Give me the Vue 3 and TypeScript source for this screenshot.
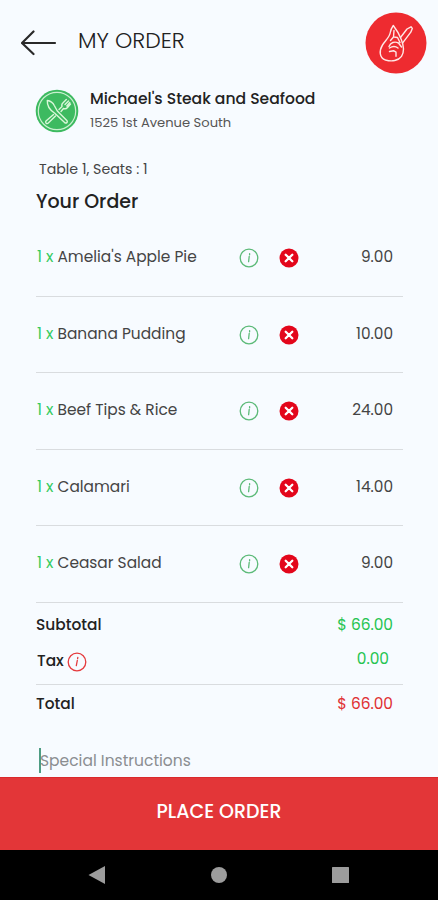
<script setup lang="ts">
interface OrderItem {
  name: string
  qty: number
  price: string
}

const items: OrderItem[] = [
  { name: "Amelia's Apple Pie", qty: 1, price: '9.00' },
  { name: 'Banana Pudding', qty: 1, price: '10.00' },
  { name: 'Beef Tips & Rice', qty: 1, price: '24.00' },
  { name: 'Calamari', qty: 1, price: '14.00' },
  { name: 'Ceasar Salad', qty: 1, price: '9.00' },
]
</script>

<template>
  <div class="screen">
    <header class="header">
      <svg class="back" width="36" height="26" viewBox="0 0 36 26">
        <path d="M12.500 1.500 1 13l11.500 11M1 13H34" />
      </svg>
      <h1 class="title">MY ORDER</h1>
      <svg class="brand" width="62" height="62" viewBox="0 0 62 62">
        <circle class="brand-bg" cx="31" cy="31" r="30.500" />
        <path d="M28.300 13.500c-1.800 2.500-2.600 4.300-3 7-.8 4.800-4.600 7.500-7.800 12.500-3.600 5.800-3.200 13 3 15 6.300 1.800 13 .8 16-3.600 3.200-5 2-11.600-.4-17.400-1.800-4.800-4.400-9-7.800-13.500z" />
        <path d="M35.500 25.500 42 17l4-2.200 1.300 1.600-1.500 3.800-8.300 11" />
        <path d="M29 18.500l-.5 6.500-3 3.500M29 25l3.500.5 2.500 5M24 34.500c1.500-4 5.500-5.500 9.500-3.500l3 4M24.500 36c3-2 6-2 8.500 0M24.500 39.500l4-.8 2.500 1.500v4" />
      </svg>
    </header>

    <section class="restaurant">
      <svg class="logo" width="44" height="44" viewBox="0 0 44 44">
        <circle class="logo-bg" cx="22" cy="22" r="21.300" />
        <circle class="ring" cx="22" cy="22" r="18.700" />
        <path class="tool" d="M12.300 11.500c3.500.5 5.500 2 7 5l3 5.500 9.500 9.500c1.500 1.500-.7 3.500-2.200 2L19.500 24c-4-2.500-7.500-6.500-7.200-12.500z" />
        <path class="tool" d="M18.500 25.500 11 32c-1.200 1.500.8 3.500 2.300 2.100l7.200-7M24 20.500l3-3c-.7-2 0-3 1.300-4l3-3M30 15.500l3.500-3.500M26 22.500l2.500-3c1.700.7 3 .2 4-1l3-3.500M31.800 17l3-3.500" />
      </svg>
      <div class="place">
        <div class="place-name">Michael's Steak and Seafood</div>
        <div class="place-address">1525 1st Avenue South</div>
      </div>
    </section>

    <main class="content">
      <div class="table-info">Table 1, Seats : 1</div>
      <h2 class="heading">Your Order</h2>

      <div v-for="item in items" :key="item.name" class="row">
        <div class="item"><span class="qty">{{ item.qty }} x</span><span>{{ item.name }}</span></div>
        <svg class="info" width="20" height="20" viewBox="0 0 20 20">
          <circle cx="10" cy="10" r="8.800" />
          <path d="M10.600 5.600v1.200M10.200 8.500l-.6 5.200" />
        </svg>
        <svg class="remove" width="20" height="20" viewBox="0 0 20 20">
          <circle cx="10" cy="10" r="9.500" />
          <path d="m6.700 6.700 6.600 6.600M13.300 6.700l-6.600 6.600" />
        </svg>
        <div class="price">{{ item.price }}</div>
      </div>

      <div class="totals">
        <div class="line subtotal"><span>Subtotal</span><span class="amount green">$ 66.00</span></div>
        <div class="line tax">
          <span class="tax-label">Tax</span>
          <svg class="info red-info" width="20" height="20" viewBox="0 0 20 20">
            <circle cx="10" cy="10" r="8.800" />
            <path d="M10.800 5.500l-.2 1.200M10.300 8.500l-1 5.200" />
          </svg>
          <span class="amount green">0.00</span>
        </div>
      </div>
      <div class="line total"><span>Total</span><span class="amount red">$ 66.00</span></div>

      <div class="instructions"><i class="caret"></i><span>Special Instructions</span></div>
    </main>

    <button class="place-order">PLACE ORDER</button>
    <nav class="navbar">
      <svg width="438" height="50" viewBox="0 0 438 50">
        <path d="M88.500 25 105 16v18z" />
        <circle cx="219" cy="25" r="8" />
        <rect x="332" y="17" width="17" height="16" rx=".5" />
      </svg>
    </nav>
  </div>
</template>

<style>
body {
  background: #f7fbff;
}
</style>

<style scoped>
.screen {
  width: 438px;
  height: 900px;
  overflow: hidden;
  display: flex;
  flex-direction: column;
  background: #f7fbff;
  color: #222;
  font-family: Poppins, Inter, "Liberation Sans", sans-serif;
}
svg {
  display: block;
  flex: none;
  fill: none;
  stroke-linecap: round;
  stroke-linejoin: round;
}
.header {
  height: 84px;
  display: flex;
  align-items: center;
  padding: 1px 11px 0 21px;
  box-sizing: border-box;
  flex: none;
}
.back {
  stroke: #292929;
  stroke-width: 2.200;
}
.title {
  margin: -4px auto 0 21px;
  font-size: 22px;
  line-height: 30px;
  font-weight: 300;
  white-space: nowrap;
}
.brand {
  stroke: #ffe7e5;
  stroke-width: 1.400;
}
.brand-bg {
  fill: #ee2b30;
  stroke: none;
}
.restaurant {
  height: 66px;
  display: flex;
  padding: 5px 0 0 35px;
  box-sizing: border-box;
  flex: none;
}
.logo-bg {
  fill: #3dba60;
}
.ring {
  stroke: #c9f0cf;
  stroke-width: 1.200;
}
.tool {
  stroke: #d9f7d8;
  stroke-width: 1.400;
}
.place {
  padding-left: 11px;
  white-space: nowrap;
}
.place-name {
  font-size: 15.600px;
  font-weight: 500;
  line-height: 20px;
}
.place-address {
  margin-top: 4px;
  font-size: 13.100px;
  line-height: 20px;
  color: #555;
}
.content {
  flex: 1;
  min-height: 0;
  padding: 0 35px 0 36px;
}
.table-info {
  padding: 9px 0 0 3px;
  font-size: 14.200px;
  line-height: 20px;
  color: #444;
}
.heading {
  margin: 9px 0 0;
  font-size: 19px;
  line-height: 28px;
  font-weight: 500;
}
.row {
  height: 76.600px;
  box-sizing: border-box;
  border-bottom: 1px solid #d9dcdf;
  display: flex;
  padding: 27px 10px 0 1px;
}
.heading + .row {
  height: 80.500px;
  padding-top: 31px;
}
.item {
  width: 202px;
  font-size: 15.400px;
  line-height: 20px;
  white-space: nowrap;
  color: #444;
}
.qty {
  display: inline-block;
  width: 20.500px;
  color: #36cb60;
}
.info {
  margin-top: 1px;
  stroke: #5cba78;
  stroke-width: 1.300;
}
.remove {
  margin: 1px 0 0 20px;
  stroke: #fff;
  stroke-width: 2.300;
}
.remove circle {
  fill: #e3061b;
  stroke: none;
}
.price {
  margin-left: auto;
  font-size: 15.300px;
  line-height: 20px;
  color: #444;
}
.totals {
  height: 82px;
  box-sizing: border-box;
  border-bottom: 1px solid #d9dcdf;
}
.line {
  display: flex;
  font-size: 15.400px;
  line-height: 20px;
  font-weight: 500;
}
.amount {
  margin-left: auto;
  font-weight: 400;
}
.subtotal {
  padding: 12px 10px 0 0;
}
.tax {
  padding: 16px 14px 0 1px;
}
.tax-label {
  width: 30px;
}
.tax .amount {
  margin-top: -2px;
}
.red-info {
  stroke: #e53a3d;
}
.green {
  color: #25c451;
}
.red {
  color: #df3033;
}
.total {
  padding: 9px 10px 0 0;
}
.instructions {
  display: flex;
  align-items: center;
  height: 26px;
  margin: 34px 0 0 3px;
  font-size: 15.500px;
  color: #8b8e91;
}
.caret {
  width: 2px;
  height: 25px;
  margin-right: -1px;
  background: #4d9c83;
}
.place-order {
  height: 73px;
  flex: none;
  margin: 0;
  padding: 0 0 4px;
  border: 0;
  border-top: 1px solid #d9292c;
  background: #e33638;
  color: #fff;
  font: 500 19px/30px Poppins, Inter, "Liberation Sans", sans-serif;
}
.navbar {
  height: 50px;
  flex: none;
  background: #000;
}
.navbar svg {
  fill: #9c9c9c;
}
</style>
